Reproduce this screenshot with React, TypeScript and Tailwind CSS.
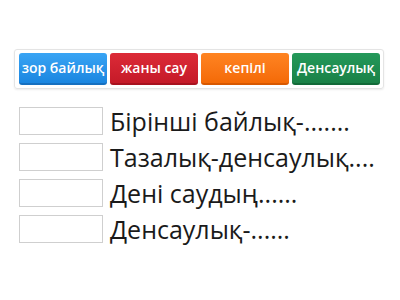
import React from "react";

const chips = [
  { t: "зор байлық", c: "bg-gradient-to-b from-[#38a4f4] to-[#1a86e0] border-b-[#1670c0]" },
  { t: "жаны сау", c: "bg-gradient-to-b from-[#dc2a37] to-[#c51a28] border-b-[#a8121f]" },
  { t: "кепілі", c: "bg-gradient-to-b from-[#ff8421] to-[#f46a06] border-b-[#d85800]" },
  { t: "Денсаулық", c: "bg-gradient-to-b from-[#24995a] to-[#1a8147] border-b-[#126a38]" },
];

const rows = [
  "Бірінші байлық-.......",
  "Тазалық-денсаулық....",
  "Дені саудың......",
  "Денсаулық-......",
];

export default function App() {
  return (
    <div className="w-[400px] h-[300px] bg-white" style={{ fontFamily: '"Open Sans", "Noto Sans", sans-serif' }}>
      <div className="pt-[49px] pl-[14px]">
        <div className="w-[370px] h-[40px] border border-[#e4e4e4] rounded-[3px] shadow-[0_1px_2px_rgba(0,0,0,0.08)] flex items-center pl-[4px] gap-[3px]">
          {chips.map((c) => (
            <div
              key={c.t}
              className={`w-[88px] h-[32px] rounded-[3px] border-b-2 flex items-center justify-center text-white text-[14px] font-semibold leading-none ${c.c}`}
            >
              {c.t}
            </div>
          ))}
        </div>
      </div>
      <div className="pl-[19px] pt-[18px] flex flex-col gap-[8px]">
        {rows.map((r) => (
          <div key={r} className="flex items-center h-[28px]">
            <div className="w-[84px] h-[28px] border border-[#cfcfcf] bg-white shrink-0" />
            <div className="ml-[7px] text-[25px] text-[#1a1a1a] leading-none whitespace-nowrap">{r}</div>
          </div>
        ))}
      </div>
    </div>
  );
}
